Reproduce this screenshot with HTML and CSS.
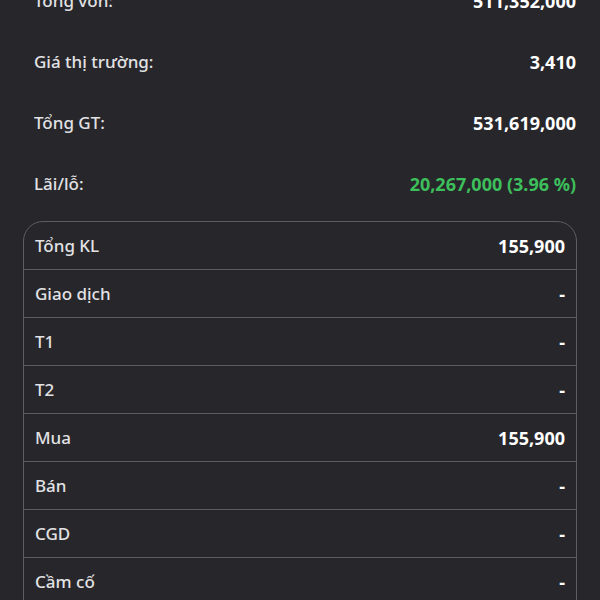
FILE: index.html
```html
<!DOCTYPE html>
<html lang="vi">

<head>
    <meta charset="UTF-8">
    <meta name="viewport" content="width=device-width, initial-scale=1.0">
    <title>Chi tiết danh mục</title>
    <link rel="stylesheet" href="styles.css">
</head>

<body>
    <div id="summary">
        <div class="sumrow">
            <span class="label">Tổng vốn:</span>
            <span class="value">511,352,000</span>
        </div>
        <div class="sumrow">
            <span class="label">Giá thị trường:</span>
            <span class="value">3,410</span>
        </div>
        <div class="sumrow">
            <span class="label">Tổng GT:</span>
            <span class="value">531,619,000</span>
        </div>
        <div class="sumrow">
            <span class="label">Lãi/lỗ:</span>
            <span class="value up">20,267,000 (3.96 %)</span>
        </div>
    </div>

    <div id="volume">
        <div class="volrow">
            <span class="label">Tổng KL</span>
            <span class="value">155,900</span>
        </div>
        <div class="volrow">
            <span class="label">Giao dịch</span>
            <span class="value">-</span>
        </div>
        <div class="volrow">
            <span class="label">T1</span>
            <span class="value">-</span>
        </div>
        <div class="volrow">
            <span class="label">T2</span>
            <span class="value">-</span>
        </div>
        <div class="volrow">
            <span class="label">Mua</span>
            <span class="value">155,900</span>
        </div>
        <div class="volrow">
            <span class="label">Bán</span>
            <span class="value">-</span>
        </div>
        <div class="volrow">
            <span class="label">CGD</span>
            <span class="value">-</span>
        </div>
        <div class="volrow">
            <span class="label">Cầm cố</span>
            <span class="value">-</span>
        </div>
    </div>
</body>

</html>
```

FILE: styles.css
```css
html,
body {
    margin: 0;
    height: 100%;
    overflow: hidden;
    background-color: #27262b;
}

body {
    font-family: "Noto Sans", "Open Sans", sans-serif;
    font-size: 17px;
    color: #e2e2e4;
}

.label {
    font-weight: 500;
}

#summary {
    margin-top: -30px;
    padding: 0 24px 0 34px;
}

.sumrow {
    display: flex;
    justify-content: space-between;
    align-items: center;
    height: 61px;
}

.value {
    font-size: 18px;
    font-weight: bold;
    color: #ffffff;
}

.value.up {
    color: #3dbf5c;
}

#volume {
    margin: 7px 23px 0 23px;
    padding-bottom: 30px;
    border: 1px solid #5d5c61;
    border-radius: 20px;
    overflow: hidden;
}

.volrow {
    display: flex;
    justify-content: space-between;
    align-items: center;
    height: 47px;
    padding: 0 11px 0 11px;
    border-bottom: 1px solid #5d5c61;
}
```
